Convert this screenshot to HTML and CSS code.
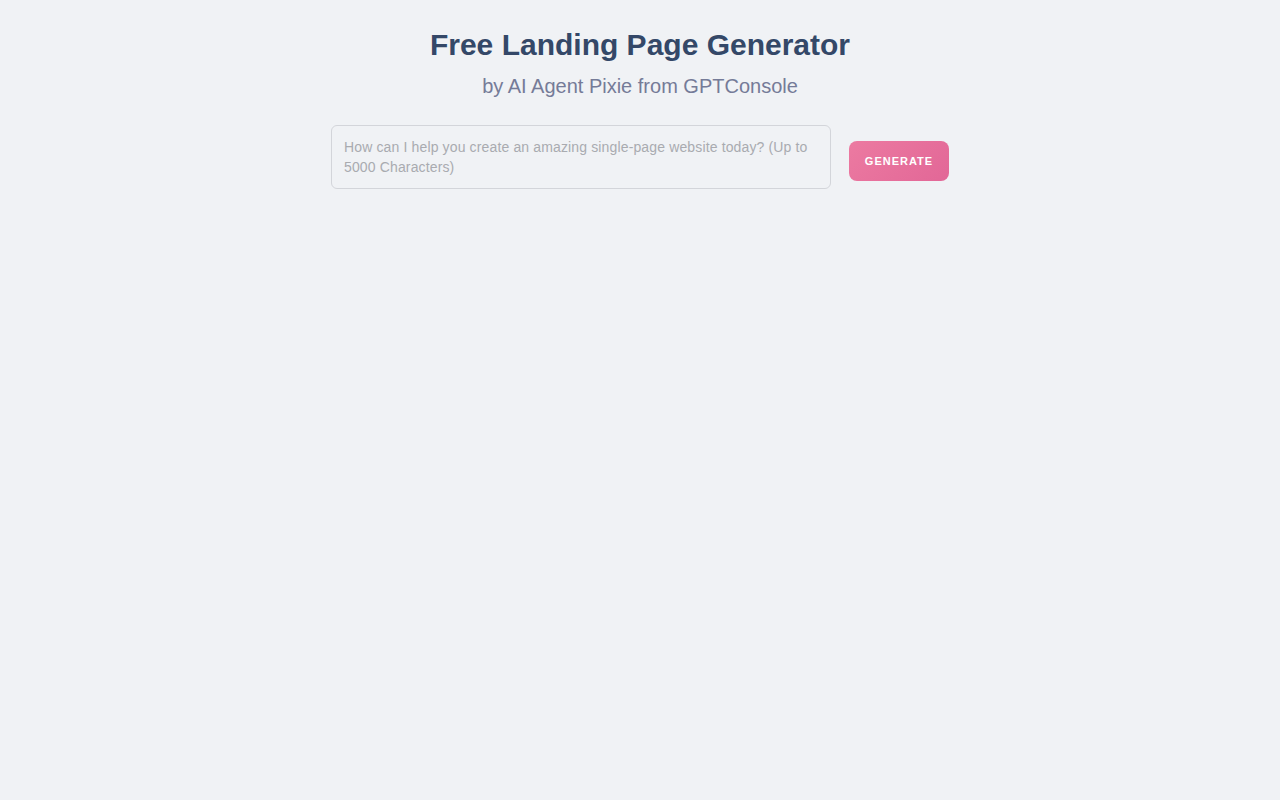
FILE: index.html
```html
<!DOCTYPE html>
<html lang="en">
<head>
<meta charset="utf-8">
<title>Free Landing Page Generator</title>
<link rel="stylesheet" href="styles.css">
</head>
<body>
<main class="page">
  <h1 class="title">Free Landing Page Generator</h1>
  <p class="subtitle">by AI Agent Pixie from GPTConsole</p>
  <form class="prompt-row">
    <textarea class="prompt" rows="2" placeholder="How can I help you create an amazing single-page website today? (Up to 5000 Characters)"></textarea>
    <button type="button" class="generate">Generate</button>
  </form>
</main>
</body>
</html>
```

FILE: styles.css
```css
html, body {
  margin: 0;
  padding: 0;
  background: #f0f2f5;
  font-family: "Liberation Sans", Arial, sans-serif;
}

.page {
  display: flex;
  flex-direction: column;
  align-items: center;
  padding-top: 27px;
}

.title {
  margin: 0;
  font-size: 30px;
  line-height: 36px;
  font-weight: 700;
  color: #344868;
}

.subtitle {
  margin: 9px 0 0;
  font-size: 20px;
  line-height: 28px;
  color: #757b98;
}

.prompt-row {
  display: flex;
  align-items: flex-start;
  gap: 18px;
  margin: 25px 0 0;
}

.prompt {
  box-sizing: border-box;
  width: 500px;
  height: 64px;
  margin: 0;
  padding: 11px 12px;
  border: 1px solid #d3d5da;
  border-radius: 6px;
  background: #f0f2f5;
  font-family: "Liberation Sans", Arial, sans-serif;
  font-size: 14px;
  line-height: 20px;
  letter-spacing: 0.14px;
  color: #333;
  resize: none;
  outline: none;
}

.prompt::placeholder {
  color: #a9abb0;
}

.generate {
  box-sizing: border-box;
  width: 100px;
  height: 40px;
  margin: 16px 0 0;
  padding: 0;
  border: none;
  border-radius: 8px;
  background: linear-gradient(135deg, #ec7aa1 0%, #e26797 100%);
  color: #fff;
  font-family: "Liberation Sans", Arial, sans-serif;
  font-size: 11px;
  font-weight: 700;
  letter-spacing: 1px;
  text-transform: uppercase;
  cursor: pointer;
}
```
